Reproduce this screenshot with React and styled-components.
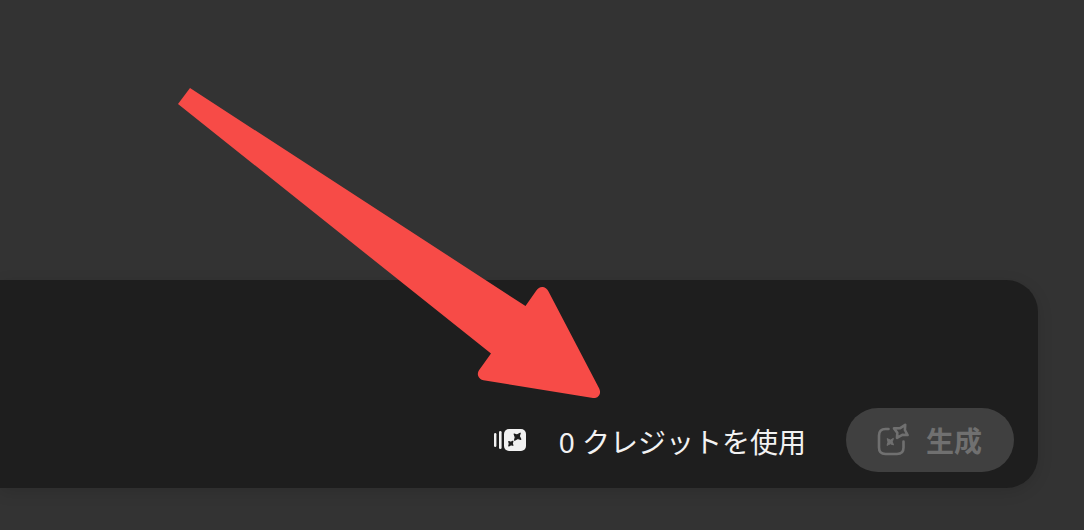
import React from "react";
import styled, { createGlobalStyle } from "styled-components";

const GlobalStyle = createGlobalStyle`
  * {
    box-sizing: border-box;
  }

  body {
    margin: 0;
    background: #333333;
    font-family: "Noto Sans", "Noto Sans CJK JP", sans-serif;
  }
`;

const Page = styled.main`
  position: relative;
  display: flex;
  flex-direction: column;
  justify-content: flex-end;
  min-height: 100vh;
  padding: 0 46px 42px 0;
  overflow: hidden;
`;

const Panel = styled.section`
  padding: 128px 24px 16px;
  border-radius: 0 32px 32px 0;
  background: #1e1e1e;
  box-shadow: 0 4px 16px rgba(0, 0, 0, 0.12);
`;

const Footer = styled.div`
  display: flex;
  align-items: center;
  justify-content: flex-end;
  gap: 40px;
`;

const Credits = styled.div`
  display: flex;
  align-items: center;
  gap: 32px;
  color: #f2f2f2;
`;

const CreditsText = styled.span`
  padding-top: 4px;
  font-size: 28px;
  line-height: 40px;
  white-space: nowrap;
`;

const GenerateButton = styled.button`
  display: flex;
  align-items: center;
  gap: 16px;
  height: 64px;
  padding: 0 32px 0 30px;
  border: none;
  border-radius: 32px;
  background: #404040;
  color: #707070;
  font-family: "Noto Sans CJK JP", sans-serif;
  font-size: 28px;
  font-weight: 700;
  line-height: 40px;
  white-space: nowrap;
`;

const Icon = styled.svg`
  display: block;
  flex: none;
  width: ${(props) => props.$width}px;
  height: ${(props) => props.$height}px;
`;

const Arrow = styled.svg`
  position: absolute;
  right: 484px;
  bottom: 132px;
  width: 422px;
  height: 310px;
  pointer-events: none;
`;

const CreditsIcon = () => (
  <Icon $width={33} $height={24} viewBox="0 0 33 24" aria-hidden="true">
    <g fill="#f2f2f2">
      <rect x="0" y="5" width="2.4" height="14" rx="1.2" />
      <rect x="5" y="3" width="2.6" height="18" rx="1.3" />
      <rect x="10" y="1" width="22" height="22" rx="5" />
    </g>
    <g fill="#1e1e1e" stroke="#1e1e1e" strokeWidth="1.2" strokeLinejoin="round">
      <path d="M20.2 6L23 7L26.2 5.2L25.3 8.2L26.8 11.3L23.6 10.5L20.6 12.2L21.3 9.2Z" />
      <path d="M14.8 13.6L16.8 14.2L18.9 13.2L18.3 15.3L18.9 17.3L16.9 16.7L14.8 17.9L15.3 15.7Z" />
    </g>
  </Icon>
);

const GenerateIcon = () => (
  <Icon $width={34} $height={34} viewBox="0 0 34 34" aria-hidden="true">
    <g
      fill="none"
      stroke="currentColor"
      strokeWidth="2.6"
      strokeLinecap="round"
      strokeLinejoin="round"
    >
      <path d="M12.5 6H9.5Q3 6 3 12.5V24.5Q3 31 9.5 31H21Q27.5 31 27.5 24.5V18.5" />
      <path d="M29.2 1.8L28.9 7L31.6 12L26.3 11.9L21 14.8L21.3 9.8L18 5.4L23.8 5.3Z" />
    </g>
    <path
      d="M11.2 15.6L14.3 17.1L17.4 15.4L16.3 18.7L17.5 21.9L14.3 20.8L11 22.4L12 19.1Z"
      fill="currentColor"
      stroke="currentColor"
      strokeLinejoin="round"
    />
  </Icon>
);

const PointerArrow = () => (
  <Arrow viewBox="178 88 422 310" aria-hidden="true">
    <path
      d="M190 88L525.5 306L536 291Q539 286.5 543 287Q546.5 287.5 548.5 291.5L599.2 388.5Q601 392.5 599 395.5Q597 398.5 593 398L483.5 380.2Q479.5 379.5 478.2 376Q477.2 373 479 370.2L491 353.5L178 104Z"
      fill="#f74b47"
    />
  </Arrow>
);

const App = () => (
  <>
    <GlobalStyle />
    <Page>
      <Panel>
        <Footer>
          <Credits>
            <CreditsIcon />
            <CreditsText>0 クレジットを使用</CreditsText>
          </Credits>
          <GenerateButton type="button" disabled>
            <GenerateIcon />
            <span>生成</span>
          </GenerateButton>
        </Footer>
      </Panel>
      <PointerArrow />
    </Page>
  </>
);

export default App;
